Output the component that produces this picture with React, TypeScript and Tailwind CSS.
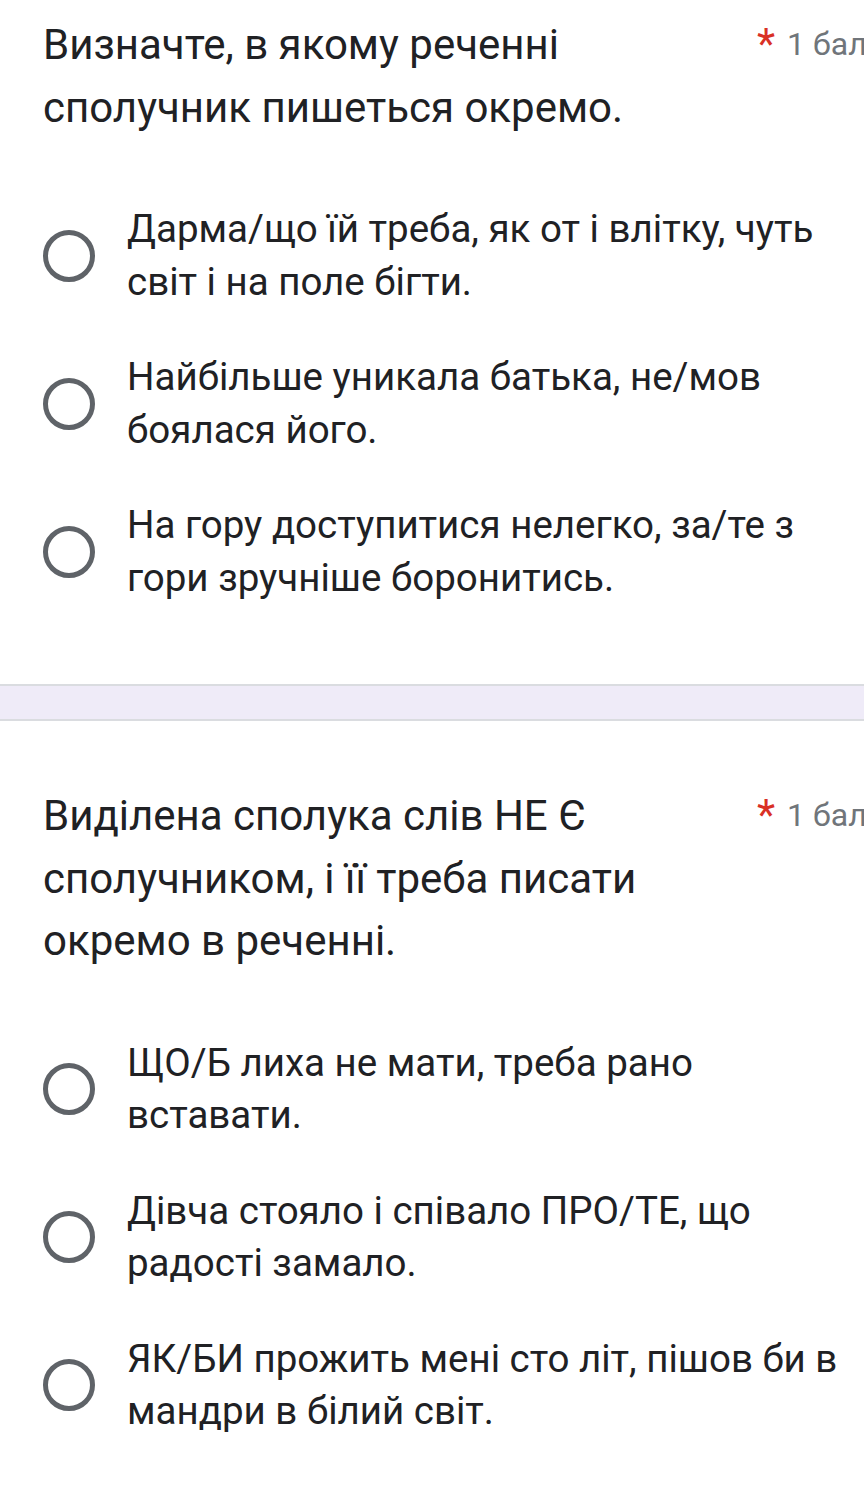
import React from "react";

const font = { fontFamily: "Roboto, 'Noto Sans', Arial, sans-serif" };

function Radio() {
  return (
    <div className="w-[52px] h-[52px] shrink-0 rounded-full border-[5px] border-[#5f6368]" />
  );
}

function Option({ text }: { text: string }) {
  return (
    <div className="flex items-center gap-[32px]">
      <Radio />
      <div className="w-[730px] text-[38.5px] leading-[52.5px] text-[#202124]">{text}</div>
    </div>
  );
}

function Question({ title, options }: { title: string; options: string[] }) {
  return (
    <div className="bg-white pl-[43px]">
      <div className="flex items-start">
        <div className="w-[690px] text-[42px] leading-[62.5px] text-[#202124]">{title}</div>
        <div className="ml-auto flex items-start whitespace-nowrap pt-[8px] w-[107px]">
          <span className="text-[#d93025] text-[42px] leading-[44px]">*</span>
          <span className="ml-[12px] text-[#70757a] text-[32px] leading-[44px]">1 бал</span>
        </div>
      </div>
      <div className="mt-[64px] flex flex-col gap-[43px]">
        {options.map((o) => (
          <Option key={o} text={o} />
        ))}
      </div>
    </div>
  );
}

export default function App() {
  return (
    <div style={font} className="w-[864px] h-[1507px] overflow-hidden bg-white">
      <div className="pt-[14px] pb-[80px] bg-white">
        <Question
          title="Визначте, в якому реченні сполучник пишеться окремо."
          options={[
            "Дарма/що їй треба, як от і влітку, чуть світ і на поле бігти.",
            "Найбільше уникала батька, не/мов боялася його.",
            "На гору доступитися нелегко, за/те з гори зручніше боронитись.",
          ]}
        />
      </div>
      <div className="h-[37px] bg-[#efebf8] border-t-[2px] border-b-[2px] border-[#dadce0]" />
      <div className="pt-[64px] bg-white">
        <Question
          title="Виділена сполука слів НЕ Є сполучником, і її треба писати окремо в реченні."
          options={[
            "ЩО/Б лиха не мати, треба рано вставати.",
            "Дівча стояло і співало ПРО/ТЕ, що радості замало.",
            "ЯК/БИ прожить мені сто літ, пішов би в мандри в білий світ.",
          ]}
        />
      </div>
    </div>
  );
}
